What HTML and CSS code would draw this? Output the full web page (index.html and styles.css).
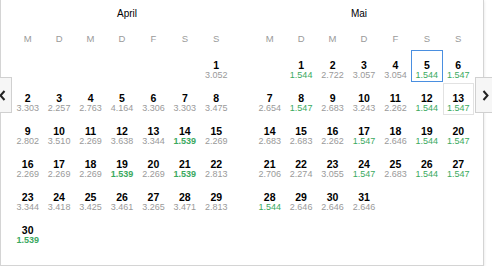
FILE: index.html
```html
<!DOCTYPE html>
<html>
<head>
<meta charset="utf-8">
<link rel="stylesheet" href="styles.css">
</head>
<body>
<div class="picker">
  <button class="nav nav-prev" aria-label="prev"><svg width="7" height="11" viewBox="0 0 7 11"><path d="M5.5 1 L1.5 5.5 L5.5 10" fill="none" stroke="#222" stroke-width="2"/></svg></button>
  <button class="nav nav-next" aria-label="next"><svg width="7" height="11" viewBox="0 0 7 11"><path d="M1.5 1 L5.5 5.5 L1.5 10" fill="none" stroke="#222" stroke-width="2"/></svg></button>

  <div class="month">
    <div class="title title-left">April</div>
    <div class="grid">
      <div class="dow">M</div><div class="dow">D</div><div class="dow">M</div><div class="dow">D</div><div class="dow">F</div><div class="dow">S</div><div class="dow">S</div>
      <div class="cell empty"></div><div class="cell empty"></div><div class="cell empty"></div><div class="cell empty"></div><div class="cell empty"></div><div class="cell empty"></div>
      <div class="cell"><b>1</b><span>3.052</span></div>
      <div class="cell"><b>2</b><span>3.303</span></div>
      <div class="cell"><b>3</b><span>2.257</span></div>
      <div class="cell"><b>4</b><span>2.763</span></div>
      <div class="cell"><b>5</b><span>4.164</span></div>
      <div class="cell"><b>6</b><span>3.306</span></div>
      <div class="cell"><b>7</b><span>3.303</span></div>
      <div class="cell"><b>8</b><span>3.475</span></div>
      <div class="cell"><b>9</b><span>2.802</span></div>
      <div class="cell"><b>10</b><span>3.510</span></div>
      <div class="cell"><b>11</b><span>2.269</span></div>
      <div class="cell"><b>12</b><span>3.638</span></div>
      <div class="cell"><b>13</b><span>3.344</span></div>
      <div class="cell"><b>14</b><span class="low best">1.539</span></div>
      <div class="cell"><b>15</b><span>2.269</span></div>
      <div class="cell"><b>16</b><span>2.269</span></div>
      <div class="cell"><b>17</b><span>2.269</span></div>
      <div class="cell"><b>18</b><span>2.269</span></div>
      <div class="cell"><b>19</b><span class="low best">1.539</span></div>
      <div class="cell"><b>20</b><span>2.269</span></div>
      <div class="cell"><b>21</b><span class="low best">1.539</span></div>
      <div class="cell"><b>22</b><span>2.813</span></div>
      <div class="cell"><b>23</b><span>3.344</span></div>
      <div class="cell"><b>24</b><span>3.418</span></div>
      <div class="cell"><b>25</b><span>3.425</span></div>
      <div class="cell"><b>26</b><span>3.461</span></div>
      <div class="cell"><b>27</b><span>3.265</span></div>
      <div class="cell"><b>28</b><span>3.471</span></div>
      <div class="cell"><b>29</b><span>2.813</span></div>
      <div class="cell"><b>30</b><span class="low best">1.539</span></div>
    </div>
  </div>

  <div class="month">
    <div class="title title-right">Mai</div>
    <div class="grid">
      <div class="dow">M</div><div class="dow">D</div><div class="dow">M</div><div class="dow">D</div><div class="dow">F</div><div class="dow">S</div><div class="dow">S</div>
      <div class="cell empty"></div>
      <div class="cell"><b>1</b><span class="low">1.544</span></div>
      <div class="cell"><b>2</b><span>2.722</span></div>
      <div class="cell"><b>3</b><span>3.057</span></div>
      <div class="cell"><b>4</b><span>3.054</span></div>
      <div class="cell selected"><b>5</b><span class="low">1.544</span></div>
      <div class="cell"><b>6</b><span class="low">1.547</span></div>
      <div class="cell"><b>7</b><span>2.654</span></div>
      <div class="cell"><b>8</b><span class="low">1.547</span></div>
      <div class="cell"><b>9</b><span>2.683</span></div>
      <div class="cell"><b>10</b><span>3.243</span></div>
      <div class="cell"><b>11</b><span>2.262</span></div>
      <div class="cell"><b>12</b><span class="low">1.544</span></div>
      <div class="cell hover"><b>13</b><span class="low">1.547</span></div>
      <div class="cell"><b>14</b><span>2.683</span></div>
      <div class="cell"><b>15</b><span>2.683</span></div>
      <div class="cell"><b>16</b><span>2.262</span></div>
      <div class="cell"><b>17</b><span class="low">1.547</span></div>
      <div class="cell"><b>18</b><span>2.646</span></div>
      <div class="cell"><b>19</b><span class="low">1.544</span></div>
      <div class="cell"><b>20</b><span class="low">1.547</span></div>
      <div class="cell"><b>21</b><span>2.706</span></div>
      <div class="cell"><b>22</b><span>2.274</span></div>
      <div class="cell"><b>23</b><span>3.055</span></div>
      <div class="cell"><b>24</b><span class="low">1.547</span></div>
      <div class="cell"><b>25</b><span>2.683</span></div>
      <div class="cell"><b>26</b><span class="low">1.544</span></div>
      <div class="cell"><b>27</b><span class="low">1.547</span></div>
      <div class="cell"><b>28</b><span class="low">1.544</span></div>
      <div class="cell"><b>29</b><span>2.646</span></div>
      <div class="cell"><b>30</b><span>2.646</span></div>
      <div class="cell"><b>31</b><span>2.646</span></div>
    </div>
  </div>
</div>
</body>
</html>
```

FILE: styles.css
```css
html, body {
  margin: 0;
  padding: 0;
  background: #fff;
  overflow: hidden;
}
body {
  font-family: "Liberation Sans", Arial, sans-serif;
  color: #111;
}
.picker {
  position: relative;
  box-sizing: border-box;
  width: 484px;
  height: 266px;
  border: 1px solid #d4d4d4;
  border-top: none;
  box-shadow: 0 1px 3px rgba(0, 0, 0, 0.12);
  padding: 8px 9px 0 11px;
  display: flex;
  gap: 22px;
}
.month {
  width: 220px;
}
.title {
  font-size: 10px;
  line-height: 12px;
  text-align: center;
  color: #000;
}
.title-left { padding-left: 10px; }
.title-right { padding-right: 10px; }
.grid {
  display: grid;
  grid-template-columns: repeat(7, 1fr);
  margin-top: 13px;
  row-gap: 1px;
}
.dow {
  font-size: 9.5px;
  line-height: 11px;
  color: #9a9a9a;
  text-align: center;
  margin-bottom: 5px;
}
.cell {
  box-sizing: border-box;
  height: 32px;
  display: flex;
  flex-direction: column;
  align-items: center;
  border: 1px solid transparent;
  padding-top: 9px;
}
.cell b {
  font-size: 10.5px;
  line-height: 10px;
  font-weight: bold;
  color: #000;
}
.cell span {
  font-size: 9px;
  line-height: 10px;
  color: #9a9a9a;
}
.cell span.low {
  color: #3aa95e;
}
.cell span.best {
  font-weight: bold;
}
.cell.selected {
  border-color: #4a8fe0;
}
.cell.hover {
  border-color: #e2e2e2;
}
.nav {
  position: absolute;
  top: 77px;
  width: 20px;
  height: 36px;
  padding: 0;
  margin: 0;
  background: #f6f6f6;
  border: 1px solid #d0d0d0;
  display: flex;
  align-items: center;
  justify-content: center;
}
.nav-prev {
  left: -9px;
}
.nav-next {
  left: 474px;
}
```
